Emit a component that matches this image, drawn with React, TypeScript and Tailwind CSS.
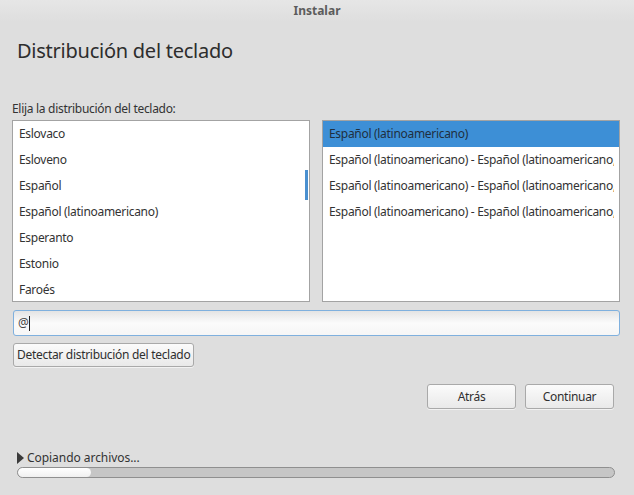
import React from 'react';

const layouts = ['Eslovaco', 'Esloveno', 'Español', 'Español (latinoamericano)', 'Esperanto', 'Estonio', 'Faroés'];

const variants = [
  'Español (latinoamericano)',
  'Español (latinoamericano) - Español (latinoamericano, con teclas muertas)',
  'Español (latinoamericano) - Español (latinoamericano, Dvorak)',
  'Español (latinoamericano) - Español (latinoamericano, eliminar teclas muertas)',
];

const btn =
  'rounded-[3px] border border-[#a9a9a9] bg-gradient-to-b from-[#fbfbfb] to-[#e9e9e9] text-[#2f2f2f] shadow-[0_1px_0_rgba(255,255,255,0.6)]';

export default function App() {
  return (
    <div className="w-[634px] h-[495px] bg-[#dedede] flex flex-col font-['Noto_Sans',sans-serif] text-[12px] tracking-[-0.3px] text-[#333] overflow-hidden">
      {/* Title bar */}
      <div className="h-[22px] flex items-center justify-center bg-gradient-to-b from-[#e6e6e6] to-[#dedede]">
        <span className="font-bold text-[#5c5c5c] text-[12px] tracking-normal">Instalar</span>
      </div>

      <h1 className="text-[20px] leading-[26px] tracking-[-0.25px] text-[#2d2d2d] ml-[17px] mt-[16px]">Distribución del teclado</h1>

      <div className="px-[12px] mt-[37px]">
        <p className="leading-[16px] text-[#333]">Elija la distribución del teclado:</p>

        <div className="flex gap-[12px] mt-[3px]">
          {/* Left list */}
          <div className="relative w-[298px] h-[182px] bg-white border border-[#a3a3a3] overflow-hidden">
            {layouts.map(l => (
              <div key={l} className="h-[26px] flex items-center pl-[6px] text-[#333]">{l}</div>
            ))}
            <div className="absolute right-[1px] top-[49px] w-[3px] h-[30px] bg-[#4a90d0]" />
          </div>

          {/* Right list */}
          <div className="w-[298px] h-[182px] bg-white border border-[#a3a3a3] overflow-hidden">
            {variants.map((v, i) => (
              <div
                key={i}
                className={`h-[26px] flex items-center pl-[6px] ${
                  i === 0 ? 'bg-[#3d8fd6] text-[#1f2f3f]' : 'text-[#333]'
                }`}
              >
                <span className="block w-[285px] overflow-hidden whitespace-nowrap">{v}</span>
              </div>
            ))}
          </div>
        </div>

        {/* Test input */}
        <div className="mt-[8px] ml-[1px] w-[607px] h-[26px] rounded-[3px] border border-[#7fb0de] bg-gradient-to-b from-[#e4e4e4] via-[#fbfbfb] to-[#f6f6f6] flex items-center pl-[4px] text-[#444]">
          <span>@</span>
          <span className="w-px h-[15px] bg-[#222]" />
        </div>

        <button className={`${btn} mt-[7px] ml-[1px] h-[24px] px-[3px] text-[12px] leading-none`}>
          Detectar distribución del teclado
        </button>
      </div>

      <div className="flex justify-end gap-[9px] pr-[20px] mt-[17px]">
        <button className={`${btn} w-[89px] h-[25px] text-[12px]`}>Atrás</button>
        <button className={`${btn} w-[89px] h-[25px] text-[12px]`}>Continuar</button>
      </div>

      <div className="mt-auto pb-[17px] px-[17px]">
        <div className="flex items-center gap-[3px] text-[#333] leading-[16px] tracking-[-0.05px]">
          <svg width="7" height="12" viewBox="0 0 7 12">
            <path d="M0 0 L7 6 L0 12 Z" fill="#3a3a3a" />
          </svg>
          <span>Copiando archivos...</span>
        </div>
        <div className="mt-[1px] mr-[2px] h-[11px] rounded-full border border-[#8f8f8f] bg-[#c6c6c6] overflow-hidden">
          <div className="h-full w-[73px] rounded-full bg-gradient-to-b from-[#ffffff] to-[#f0f0f0]" />
        </div>
      </div>
    </div>
  );
}
